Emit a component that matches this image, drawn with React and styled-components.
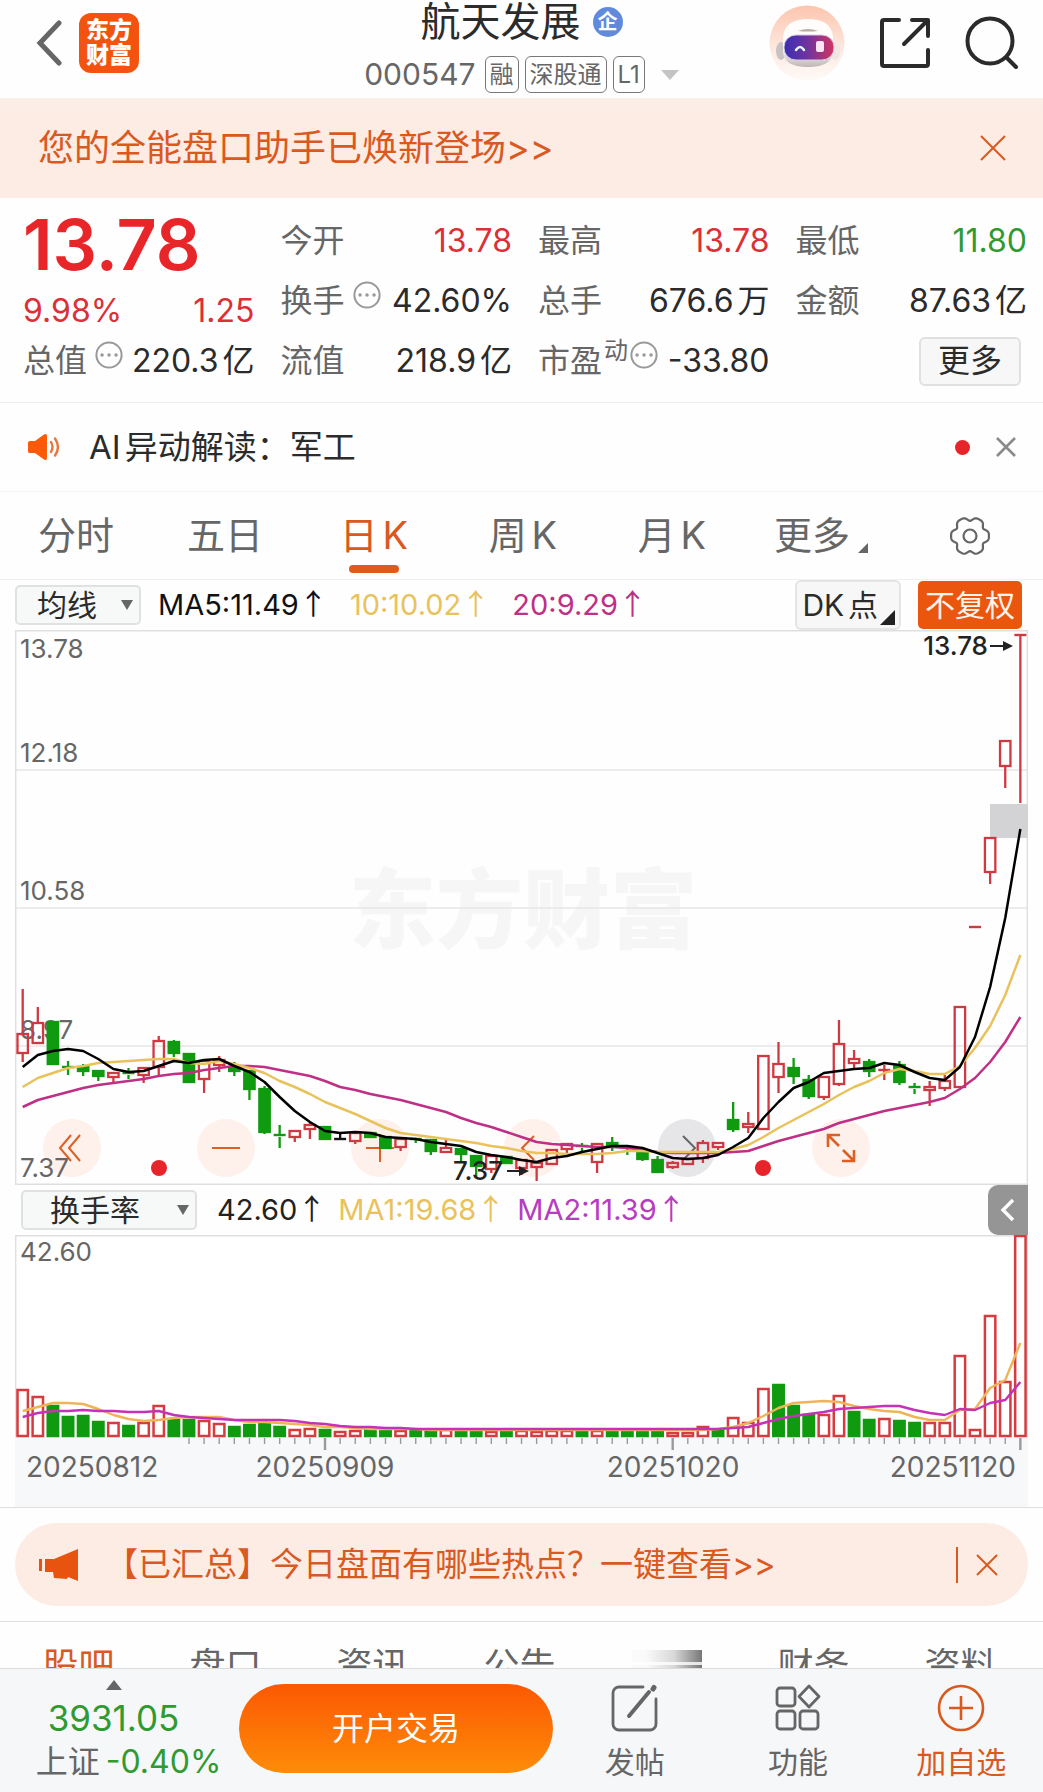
import { useState } from 'react';
import styled, { createGlobalStyle } from 'styled-components';

const color = {
  text: '#2b2b2b',
  label: '#666666',
  red: '#dc2f36',
  green: '#2f9a2f',
  orange: '#d9591f',
  brand: '#ea560e',
  peach: '#fdece4',
  line: '#e6e6e6',
  yellow: '#e9c25c',
  magenta: '#bf2f86',
  purple: '#b63cc0',
};

const STEP = 15.116;
const candleX = index => 7.7 + index * STEP;

// [direction, high, body top, body bottom, low]
const candles = [
  ['up', 359, 404, 423, 432], ['up', 377, 393, 413, 413], ['down', 392, 392, 434, 435],
  ['down', 431, 437, 438, 445], ['down', 434, 437, 441, 446], ['down', 440, 441, 446, 451],
  ['up', 443, 443, 447, 452], ['down', 438, 443, 445, 449], ['up', 438, 438, 445, 453],
  ['up', 406, 411, 437, 446], ['down', 410, 412, 423, 427], ['down', 424, 424, 452, 452],
  ['up', 431, 431, 449, 463], ['up', 426, 430, 435, 442], ['down', 432, 437, 441, 446],
  ['down', 441, 441, 459, 470], ['down', 456, 459, 502, 504], ['down', 495, 505, 507, 518],
  ['up', 501, 501, 507, 512], ['up', 493, 495, 499, 509], ['down', 496, 497, 509, 510],
  ['flat', 504, 509, 509, 510], ['up', 503, 503, 511, 514], ['down', 503, 503, 507, 507],
  ['down', 507, 507, 518, 518], ['up', 509, 509, 517, 521], ['down', 509, 509, 510, 513],
  ['down', 509, 510, 521, 525], ['up', 510, 518, 522, 522], ['down', 518, 519, 524, 532],
  ['down', 526, 526, 536, 547], ['up', 526, 526, 539, 543], ['down', 527, 527, 533, 533],
  ['up', 529, 530, 538, 545], ['up', 532, 533, 537, 551], ['up', 520, 520, 534, 534],
  ['up', 514, 514, 519, 523], ['down', 513, 516, 518, 521], ['up', 514, 514, 532, 543],
  ['down', 507, 513, 516, 521], ['down', 515, 517, 518, 525], ['down', 523, 523, 529, 531],
  ['down', 526, 530, 542, 542], ['up', 531, 533, 537, 539], ['up', 528, 529, 534, 534],
  ['up', 510, 513, 528, 533], ['up', 513, 513, 517, 520], ['down', 472, 490, 499, 502],
  ['up', 482, 494, 497, 503], ['up', 426, 426, 499, 499], ['up', 412, 434, 447, 463],
  ['down', 428, 438, 446, 454], ['down', 445, 450, 466, 469], ['up', 447, 447, 467, 470],
  ['up', 390, 414, 454, 456], ['up', 420, 429, 433, 439], ['down', 429, 432, 441, 447],
  ['up', 435, 440, 441, 450], ['down', 431, 435, 452, 455], ['down', 453, 457, 459, 464],
  ['up', 451, 457, 460, 476], ['up', 445, 451, 458, 461], ['up', 377, 377, 457, 457],
  ['up', 297, 297, 297, 297], ['up', 208, 208, 242, 254], ['up', 111, 111, 136, 158],
  ['up', 5, 5, 5, 173],
];

const ma5 = [
  437, 425, 421, 419, 421, 429, 439, 442, 441, 436, 431, 433, 430, 429, 436, 442, 452, 467, 481,
  492, 501, 503, 502, 503, 507, 508, 509, 512, 514, 516, 522, 525, 527, 530, 532, 528, 526, 522,
  519, 516, 516, 518, 523, 528, 529, 528, 525, 517, 508, 488, 472, 458, 452, 443, 441, 439, 438,
  433, 435, 442, 448, 450, 437, 407, 357, 288, 199,
];
const ma10 = [
  457, 448, 443, 438, 436, 433, 432, 431, 430, 429, 429, 433, 434, 431, 434, 438, 443, 451, 457,
  464, 472, 478, 484, 491, 498, 503, 505, 507, 509, 511, 513, 516, 518, 521, 523, 523, 524, 524,
  524, 523, 521, 521, 522, 522, 522, 522, 522, 519, 515, 507, 498, 490, 482, 474, 465, 457, 451,
  443, 439, 441, 444, 444, 436, 418, 396, 365, 325,
];
const ma20 = [
  477, 470, 466, 462, 458, 455, 453, 451, 449, 446, 444, 443, 440, 438, 436, 436, 437, 440, 443,
  446, 451, 457, 460, 464, 467, 470, 474, 478, 482, 488, 493, 497, 502, 507, 512, 514, 515, 516,
  517, 517, 518, 520, 522, 523, 523, 523, 523, 522, 521, 516, 511, 507, 503, 499, 493, 489, 485,
  481, 478, 475, 472, 468, 459, 448, 432, 412, 387,
];

const turnover = [
  48, 41, 32, 21, 22, 16, 15, 12, 15, 32, 18, 18, 17, 14, 11, 13, 14, 11, 8, 9, 8, 6, 7, 8, 8, 7,
  7, 8, 8, 8, 8, 6, 6, 7, 6, 7, 7, 7, 7, 8, 8, 7, 7, 5, 5, 11, 8, 20, 15, 49, 53, 32, 23, 23, 42,
  26, 18, 19, 17, 15, 15, 15, 82, 8, 122, 56, 202,
];
const turnoverFalls = [
  2, 3, 4, 5, 7, 10, 11, 14, 15, 16, 17, 20, 23, 24, 26, 27, 29, 30, 32, 37, 39, 40, 41, 42, 46,
  50, 51, 52, 55, 56, 58, 59,
];
const turnoverMa1 = [
  176, 172, 168, 168, 169, 174, 180, 184, 186, 185, 183, 182, 182, 182, 185, 187, 187, 188, 189,
  190, 192, 192, 193, 194, 194, 194, 194, 195, 195, 195, 195, 195, 195, 195, 195, 195, 195, 195,
  195, 195, 195, 195, 195, 195, 195, 195, 194, 192, 188, 181, 173, 168, 167, 166, 167, 171, 174,
  176, 177, 182, 185, 185, 175, 174, 153, 145, 108,
];
const turnoverMa2 = [
  182, 178, 176, 176, 175, 176, 176, 177, 177, 176, 180, 182, 183, 184, 185, 185, 185, 185, 186,
  188, 189, 191, 192, 192, 193, 193, 194, 194, 194, 194, 194, 194, 194, 194, 194, 194, 194, 194,
  194, 194, 194, 194, 194, 194, 194, 194, 194, 193, 192, 188, 184, 181, 179, 177, 174, 173, 172,
  171, 171, 175, 178, 180, 174, 175, 168, 165, 147,
];

const toPoints = values => values.map((y, i) => `${candleX(i)},${y}`).join(' ');

const App = () => {
  const [period, setPeriod] = useState('日K');

  return (
    <>
      <GlobalStyle />
      <Page>
        <Scroller>
          <Header />
          <NoticeBar>
            <NoticeLink href='#assistant'>您的全能盘口助手已焕新登场&gt;&gt;</NoticeLink>
            <IconButton aria-label='关闭提示'>
              <CrossIcon size={26} stroke={color.orange} width={2} />
            </IconButton>
          </NoticeBar>
          <Quote />
          <NewsBar>
            <HornIcon />
            <NewsText>AI异动解读：军工</NewsText>
            <Dot />
            <IconButton aria-label='关闭解读'>
              <CrossIcon size={20} stroke='#8a8a8a' width={2.6} />
            </IconButton>
          </NewsBar>
          <PeriodTabs role='tablist'>
            {['分时', '五日', '日K', '周K', '月K'].map(label => (
              <PeriodTab
                role='tab'
                key={label}
                aria-selected={label === period}
                $active={label === period}
                onClick={() => setPeriod(label)}
              >
                {label}
              </PeriodTab>
            ))}
            <PeriodTab>
              更多
              <Corner $size={10} $color={color.label} />
            </PeriodTab>
            <PeriodTab aria-label='设置'>
              <GearIcon />
            </PeriodTab>
          </PeriodTabs>
          <ChartBar $gap={17}>
            <Picker label='均线' width={126} indent={20} />
            <Legends $gap={22}>
              <Legend $color='#111111'>MA5:11.49</Legend>
              <Legend $color={color.yellow}>10:10.02</Legend>
              <Legend $color={color.magenta}>20:9.29</Legend>
            </Legends>
            <DkButton>
              DK点
              <Corner $size={15} $color='#222222' />
            </DkButton>
            <AdjustButton>不复权</AdjustButton>
          </ChartBar>
          <PriceChart />
          <ChartBar $gap={20} $indent={6}>
            <Picker label='换手率' width={176} indent={27} />
            <Legends $gap={12}>
              <Legend $color='#222222'>42.60</Legend>
              <Legend $color={color.yellow}>MA1:19.68</Legend>
              <Legend $color={color.purple}>MA2:11.39</Legend>
            </Legends>
            <DrawerButton aria-label='展开'>
              <svg width='16' height='26' viewBox='0 0 16 26' fill='none'>
                <path d='M13 3 3 13l10 10' stroke='#fff' strokeWidth='3.4' />
              </svg>
            </DrawerButton>
          </ChartBar>
          <TurnoverChart />
          <HotBar>
            <HotPill>
              <MegaphoneIcon />
              <HotLink href='#hot'>【已汇总】今日盘面有哪些热点？一键查看&gt;&gt;</HotLink>
              <HotDivider />
              <IconButton aria-label='关闭热点'>
                <CrossIcon size={22} stroke={color.orange} width={2} />
              </IconButton>
            </HotPill>
          </HotBar>
          <SectionTabs>
            <SectionTab href='#bar' $active>股吧</SectionTab>
            <SectionTab href='#depth'>盘口</SectionTab>
            <SectionTab href='#news'>资讯</SectionTab>
            <SectionTab href='#notice'>公告</SectionTab>
            <Loading />
            <SectionTab href='#finance'>财务</SectionTab>
            <SectionTab href='#profile'>资料</SectionTab>
          </SectionTabs>
        </Scroller>
        <BottomBar />
      </Page>
    </>
  );
};

const Header = () => (
  <HeaderRoot>
    <HeaderSide>
      <IconButton aria-label='返回'>
        <svg width='26' height='46' viewBox='0 0 26 46' fill='none'>
          <path d='M23 3 4 23l19 20' stroke='#666' strokeWidth='5' strokeLinecap='round' />
        </svg>
      </IconButton>
      <Logo>
        东方
        <br />
        财富
      </Logo>
    </HeaderSide>
    <HeaderTitle>
      <Name>
        航天发展
        <CompanyMark>企</CompanyMark>
      </Name>
      <Code>
        000547
        <Tags>
          <Tag>融</Tag>
          <Tag>深股通</Tag>
          <Tag>L1</Tag>
        </Tags>
        <svg width='18' height='10' viewBox='0 0 18 10'>
          <path d='M0 0h18L9 10z' fill='#c4c4c4' />
        </svg>
      </Code>
    </HeaderTitle>
    <HeaderSide $end>
      <IconButton aria-label='智能助手'>
        <RobotIcon />
      </IconButton>
      <IconButton aria-label='分享'>
        <svg width='52' height='52' viewBox='0 0 52 52' fill='none' stroke='#2b2b2b' strokeWidth='4' strokeLinecap='round' strokeLinejoin='round'>
          <path d='M20 3H5a2 2 0 0 0-2 2v42a2 2 0 0 0 2 2h42a2 2 0 0 0 2-2V33M33 3h16v16M49 3 25 27' />
        </svg>
      </IconButton>
      <IconButton aria-label='搜索'>
        <svg width='54' height='54' viewBox='0 0 54 54' fill='none' stroke='#2b2b2b' strokeWidth='4' strokeLinecap='round'>
          <circle cx='25' cy='25' r='22.5' />
          <path d='m42 42 9 9' />
        </svg>
      </IconButton>
    </HeaderSide>
  </HeaderRoot>
);

const Quote = () => (
  <QuoteRoot>
    <QuoteColumn>
      <Price>13.78</Price>
      <Change>
        <span>9.98%</span>
        <span>1.25</span>
      </Change>
      <Stat label='总值' value='220.3亿' info />
    </QuoteColumn>
    <QuoteColumn>
      <Stat label='今开' value='13.78' tone={color.red} />
      <Stat label='换手' value='42.60%' info />
      <Stat label='流值' value='218.9亿' />
    </QuoteColumn>
    <QuoteColumn>
      <Stat label='最高' value='13.78' tone={color.red} />
      <Stat label='总手' value='676.6万' />
      <Stat label='市盈' value='-33.80' note='动' info />
    </QuoteColumn>
    <QuoteColumn>
      <Stat label='最低' value='11.80' tone={color.green} />
      <Stat label='金额' value='87.63亿' />
      <StatRow>
        <MoreButton>更多</MoreButton>
      </StatRow>
    </QuoteColumn>
  </QuoteRoot>
);

const Stat = ({ label, value, tone, note, info }) => (
  <StatRow>
    <StatLabel>
      {label}
      {note && <StatNote>{note}</StatNote>}
      {info && <InfoIcon $tight={Boolean(note)} />}
    </StatLabel>
    <StatValue $color={tone || color.text}>{value}</StatValue>
  </StatRow>
);

const Picker = ({ label, width, indent }) => (
  <PickerRoot $width={width}>
    <PickerSelect aria-label={label} $indent={indent}>
      <option>{label}</option>
    </PickerSelect>
    <PickerCaret width='12' height='10' viewBox='0 0 12 10'>
      <path d='M0 0h12L6 10z' fill='#666' />
    </PickerCaret>
  </PickerRoot>
);

const Candle = ({ index, data }) => {
  const [direction, high, top, bottom, low] = data;
  const x = candleX(index);
  const stroke = { up: '#cf3a42', down: '#0f9a0f', flat: '#111111' }[direction];
  const height = Math.max(bottom - top, 0);

  return (
    <g stroke={stroke} strokeWidth='2.3'>
      <path d={`M${x} ${high}V${top}M${x} ${bottom}V${low}`} />
      {height < 3 ? (
        <path d={`M${x - 6} ${top}h12`} strokeWidth='2.4' />
      ) : (
        <rect x={x - 5.2} y={top} width='10.4' height={height} fill={direction === 'down' ? stroke : 'none'} />
      )}
    </g>
  );
};

const PriceChart = () => (
  <ChartFrame>
    <ChartTools>
      <ToolButton aria-label='快退'>
        <path d='M28 16 17 29l11 13M37 16 26 29l11 13' />
      </ToolButton>
      <ToolButton aria-label='缩小'>
        <path d='M15 29h28' />
      </ToolButton>
      <ToolButton aria-label='放大'>
        <path d='M15 29h28M29 15v28' />
      </ToolButton>
      <ToolButton aria-label='后退'>
        <path d='M30 17 18 29l12 12' />
      </ToolButton>
      <ToolButton aria-label='前进' muted>
        <path d='M25 17l12 12-12 12' />
      </ToolButton>
      <ToolButton aria-label='全屏'>
        <path d='M16 28V16h12M16 16l11 11M42 31v11H30M42 42 31 31' strokeWidth='2.6' />
      </ToolButton>
    </ChartTools>
    <ChartSvg viewBox='0 0 1013 555' role='img' aria-label='日K线图'>
      <text x='508' y='312' textAnchor='middle' fontSize='87' fontWeight='900' fill='#f7f6f6'>东方财富</text>
      <path d='M0 140h1013M0 278h1013M0 416h1013' stroke={color.line} strokeWidth='1.4' />
      <path d='M.7 .7h1011.600v553.600H.7z' fill='none' stroke='#dfdfdf' strokeWidth='1.4' />
      <g fontSize='26' fill={color.label}>
        <text x='5' y='28'>13.78</text>
        <text x='5' y='132'>12.18</text>
        <text x='5' y='270'>10.58</text>
        <text x='5' y='409'>8.97</text>
        <text x='5' y='547'>7.37</text>
      </g>
      <rect x='975' y='174' width='38' height='34' fill='#d3d3d6' />
      {candles.map((data, i) => (
        <Candle key={i} index={i} data={data} />
      ))}
      <g fill='none' strokeWidth='2.5' strokeLinejoin='round'>
        <polyline points={toPoints(ma20)} stroke={color.magenta} />
        <polyline points={toPoints(ma10)} stroke={color.yellow} />
        <polyline points={toPoints(ma5)} stroke='#000' />
      </g>
      <g fill='#e8242b'>
        <circle cx='144' cy='538' r='8' />
        <circle cx='748' cy='538' r='8' />
      </g>
      <g fontSize='26' fontWeight='500' fill='#222'>
        <text x='973' y='25' textAnchor='end'>13.78</text>
        <text x='488' y='550' textAnchor='end'>7.37</text>
        <path d='M975 16h15M492 541h15' stroke='#222' strokeWidth='2' />
        <path d='m988 11 10 5-10 5zM504 536l10 5-10 5z' />
      </g>
    </ChartSvg>
  </ChartFrame>
);

const TurnoverChart = () => (
  <AxisArea>
    <ChartSvg viewBox='0 0 1013 272' role='img' aria-label='换手率图'>
      <path d='M0 0h1013v202H0z' fill='#fff' />
      <path d='M0 .7h1013M.7 0v202M1012.3 0v202' stroke='#dfdfdf' strokeWidth='1.4' />
      <text x='5' y='26' fontSize='26' fill={color.label}>42.60</text>
      {turnover.map((height, i) => {
        const falls = turnoverFalls.includes(i);
        return (
          <rect
            key={i}
            x={candleX(i) - 5.2}
            y={203 - height}
            width='10.4'
            height={height - 2}
            stroke={falls ? '#0f9a0f' : '#d63b40'}
            strokeWidth='2.5'
            fill={falls ? '#0f9a0f' : '#fff'}
          />
        );
      })}
      <g fill='none' strokeWidth='2.4' strokeLinejoin='round'>
        <polyline points={toPoints(turnoverMa1)} stroke='#f0b458' />
        <polyline points={toPoints(turnoverMa2)} stroke='#c532b8' />
      </g>
      {turnover.slice(11).map((_, i) => {
        const major = (i + 11 - 20) % 23 === 0;
        return (
          <path
            key={i}
            d={`M${candleX(i + 11)} 203v${major ? 12 : 6}`}
            stroke='#999'
            strokeWidth={major ? 2.4 : 1.4}
          />
        );
      })}
      <g fontSize='28' fill={color.label}>
        <text x='11' y='242'>20250812</text>
        <text x='310' y='242' textAnchor='middle'>20250909</text>
        <text x='658' y='242' textAnchor='middle'>20251020</text>
        <text x='1001' y='242' textAnchor='end'>20251120</text>
      </g>
    </ChartSvg>
  </AxisArea>
);

const BottomBar = () => (
  <BottomRoot>
    <IndexButton>
      <svg width='16' height='10' viewBox='0 0 16 10'>
        <path d='M0 10h16L8 0z' fill='#666' />
      </svg>
      <IndexValue>3931.05</IndexValue>
      <IndexChange>
        <span>上证</span>
        -0.40%
      </IndexChange>
    </IndexButton>
    <TradeButton>开户交易</TradeButton>
    <Actions>
      <Action>
        <svg width='48' height='48' viewBox='0 0 48 48' fill='none' stroke='#666' strokeWidth='2.8' strokeLinecap='round'>
          <path d='M32 3H8a6 6 0 0 0-6 6v31a6 6 0 0 0 6 6h31a6 6 0 0 0 6-6V15' />
          <path d='m18 32 20-24' strokeWidth='4' />
          <path d='m42 5 1-1.500' strokeWidth='5' />
        </svg>
        发帖
      </Action>
      <Action>
        <svg width='48' height='48' viewBox='0 0 48 48' fill='none' stroke='#666' strokeWidth='2.8' strokeLinejoin='round'>
          <rect x='3' y='4' width='18' height='18' rx='3' />
          <rect x='3' y='27' width='18' height='18' rx='3' />
          <rect x='26' y='27' width='18' height='18' rx='3' />
          <path d='m35 2 10 10.500L35 23 25 12.500z' />
        </svg>
        功能
      </Action>
      <Action $accent>
        <svg width='48' height='48' viewBox='0 0 48 48' fill='none' stroke={color.orange} strokeWidth='2.6'>
          <circle cx='24' cy='24' r='22' />
          <path d='M24 12v24M12 24h24' />
        </svg>
        加自选
      </Action>
    </Actions>
  </BottomRoot>
);

const CrossIcon = ({ size, stroke, width }) => (
  <svg width={size} height={size} viewBox={`0 0 ${size} ${size}`}>
    <path
      d={`M1 1 ${size - 1} ${size - 1}M${size - 1} 1 1 ${size - 1}`}
      stroke={stroke}
      strokeWidth={width}
    />
  </svg>
);

const InfoIcon = ({ $tight }) => (
  <InfoSvg $tight={$tight} viewBox='0 0 28 28' fill='none'>
    <circle cx='14' cy='14' r='12.600' stroke='#999' strokeWidth='2' />
    <path d='M7 14h.1M14 14h.1M21 14h.1' stroke='#999' strokeWidth='3.400' strokeLinecap='round' />
  </InfoSvg>
);

const HornIcon = () => (
  <svg width='34' height='28' viewBox='0 0 34 28' fill='none'>
    <path d='M1 9.500Q1 8 3 8h5L17 1.500Q20 0 20 3v22q0 3-3 1.500L8 20H3q-2 0-2-1.500z' fill='#fb5a08' />
    <path d='M24 9q3 5 0 10M28 5.500q6 8.500 0 17' stroke='#e8763a' strokeWidth='2.400' strokeLinecap='round' />
  </svg>
);

const MegaphoneIcon = () => (
  <svg width='40' height='34' viewBox='0 0 40 34'>
    <path d='M0 11h3v12H0zM6 11h9L39 1v32l-10-4-1 2-13-1-1-6H6z' fill='#e8540f' />
  </svg>
);

const RobotIcon = () => (
  <svg width='76' height='76' viewBox='0 0 76 76'>
    <defs>
      <linearGradient id='halo' x1='0' y1='0' x2='0' y2='1'>
        <stop offset='0' stopColor='#fcc5ae' />
        <stop offset='.6' stopColor='#fdeae2' />
        <stop offset='1' stopColor='#fffaf6' />
      </linearGradient>
      <linearGradient id='visor'>
        <stop offset='0' stopColor='#3a2fb4' />
        <stop offset='.5' stopColor='#74339c' />
        <stop offset='1' stopColor='#d23560' />
      </linearGradient>
      <linearGradient id='shell' x1='0' y1='0' x2='0' y2='1'>
        <stop offset='.6' stopColor='#fffdfb' />
        <stop offset='1' stopColor='#bfb5b8' />
      </linearGradient>
    </defs>
    <circle cx='38' cy='38' r='37.500' fill='url(#halo)' />
    <ellipse cx='12' cy='46' rx='5' ry='9' fill='#c9c2c4' />
    <ellipse cx='66' cy='46' rx='5' ry='9' fill='#efe6e4' />
    <path d='M14 34C14 20 24 14 39 14s25 6 25 20v12c0 12-11 16-25 16S14 58 14 46z' fill='url(#shell)' />
    <path d='M29 26q10-4 20 0-10 1-20 0' fill='#b9ab9f' />
    <rect x='15' y='30' width='50' height='25' rx='12' fill='url(#visor)' stroke='#d9cce6' />
    <path d='M27 45q4-6 8 0' stroke='#dff' strokeWidth='2.500' fill='none' strokeLinecap='round' />
    <rect x='47' y='36' width='8' height='11' rx='2' fill='#fbe6f4' />
  </svg>
);

const gearPoints = Array.from({ length: 96 }, (_, i) => {
  const angle = (i / 96) * Math.PI * 2;
  const radius = 17.6 + 1.9 * Math.cos(angle * 6) - 0.6 * Math.cos(angle * 12);
  return `${(21 + radius * Math.cos(angle)).toFixed(2)},${(20 + radius * Math.sin(angle)).toFixed(2)}`;
}).join(' ');

const GearIcon = () => (
  <svg width='42' height='40' viewBox='0 0 42 40' fill='none' stroke='#666' strokeWidth='2.200'>
    <polygon points={gearPoints} strokeLinejoin='round' />
    <circle cx='21' cy='20' r='6.500' />
  </svg>
);

const ToolButton = ({ children, muted, ...props }) => (
  <ToolRoot $muted={muted} {...props}>
    <svg width='58' height='58' viewBox='0 0 58 58' fill='none' stroke={muted ? '#666' : '#dd5f24'} strokeWidth='2'>
      {children}
    </svg>
  </ToolRoot>
);

const GlobalStyle = createGlobalStyle`
  * {
    box-sizing: border-box;
  }

  body {
    margin: 0;
    background-color: #fefefe;
    color: ${color.text};
    font-family: Inter, 'Noto Sans CJK SC', sans-serif;
    line-height: 1.3;
    text-autospace: normal;
  }

  button,
  select {
    margin: 0;
    padding: 0;
    border: none;
    background: none;
    color: inherit;
    font: inherit;
    cursor: pointer;
  }

  a {
    color: inherit;
    text-decoration: none;
  }

  svg {
    display: block;
    flex-shrink: 0;
  }
`;

const Page = styled.div`
  display: flex;
  flex-direction: column;
  height: 100vh;
`;

const Scroller = styled.main`
  flex: 1;
  min-height: 0;
  overflow-y: auto;
  scrollbar-width: none;
`;

const IconButton = styled.button`
  display: flex;
  align-items: center;
  justify-content: center;
`;

const HeaderRoot = styled.header`
  display: grid;
  grid-template-columns: 1fr auto 1fr;
  height: 98px;
`;

const HeaderSide = styled.div`
  display: flex;
  align-items: center;
  justify-content: ${({ $end }) => ($end ? 'flex-end' : 'flex-start')};
  gap: ${({ $end }) => ($end ? 34 : 17)}px;
  height: 86px;
  padding: ${({ $end }) => ($end ? '0 24px 0 0' : '0 0 0 36px')};
`;

const Logo = styled.div`
  width: 60px;
  height: 60px;
  padding: 5px 0;
  border-radius: 12px;
  background-color: #f4520f;
  color: #ffffff;
  font-size: 23px;
  font-weight: 900;
  line-height: 25px;
  text-align: center;
`;

const HeaderTitle = styled.div`
  display: flex;
  flex-direction: column;
  align-items: center;
`;

const Name = styled.h1`
  display: flex;
  align-items: center;
  gap: 12px;
  height: 43px;
  margin: 0;
  font-size: 40px;
  font-weight: 400;
`;

const CompanyMark = styled.span`
  width: 30px;
  height: 30px;
  border-radius: 50%;
  background-color: #6189dc;
  color: #ffffff;
  font-size: 20px;
  font-weight: 700;
  line-height: 30px;
  text-align: center;
`;

const Code = styled.div`
  display: flex;
  align-items: center;
  height: 63px;
  color: ${color.label};
  font-size: 30px;
`;

const Tags = styled.span`
  display: flex;
  gap: 6px;
  margin: 0 16px 0 9px;
`;

const Tag = styled.span`
  height: 37px;
  padding: 0 4px;
  border: 1px solid #777777;
  border-radius: 6px;
  font-size: 24px;
  line-height: 35px;
`;

const NoticeBar = styled.div`
  display: flex;
  align-items: center;
  justify-content: space-between;
  height: 100px;
  padding: 0 37px 0 38px;
  background: linear-gradient(#faeee6, ${color.peach} 20px);
`;

const NoticeLink = styled.a`
  color: ${color.orange};
  font-size: 36px;
`;

const QuoteRoot = styled.section`
  display: grid;
  grid-template-columns: repeat(4, 1fr);
  gap: 26px;
  padding: 13px 16px 11px 23px;
  border-bottom: 1px solid #eeeeee;
`;

const QuoteColumn = styled.div`
  display: flex;
  flex-direction: column;
`;

const Price = styled.div`
  height: 70px;
  color: #e8262a;
  font-size: 70px;
  font-weight: 600;
  line-height: 68px;
`;

const Change = styled.div`
  display: flex;
  justify-content: space-between;
  height: 50px;
  padding-top: 10px;
  color: ${color.red};
  font-size: 32px;
  line-height: 40px;
`;

const StatRow = styled.div`
  display: flex;
  align-items: center;
  justify-content: space-between;
  height: 60px;
  font-size: 32px;
  white-space: nowrap;
`;

const StatLabel = styled.span`
  display: flex;
  align-items: center;
  color: ${color.label};
`;

const StatNote = styled.span`
  margin: 0 0 20px 2px;
  font-size: 24px;
`;

const InfoSvg = styled.svg`
  width: 28px;
  height: 28px;
  margin: 0 0 12px ${({ $tight }) => ($tight ? 2 : 8)}px;
`;

const StatValue = styled.span`
  color: ${({ $color }) => $color};
`;

const MoreButton = styled.button`
  width: 102px;
  height: 49px;
  margin: 0 6px 0 auto;
  border: 2px solid #e0e0e0;
  border-radius: 6px;
  background-color: #f7f7f7;
  line-height: 44px;
`;

const NewsBar = styled.div`
  display: flex;
  align-items: center;
  height: 89px;
  padding: 0 27px;
  border-bottom: 1px solid #f3f3f3;
`;

const NewsText = styled.span`
  flex: 1;
  margin-left: 28px;
  font-size: 33px;
`;

const Dot = styled.span`
  width: 15px;
  height: 15px;
  margin-right: 26px;
  border-radius: 50%;
  background-color: #e8242b;
`;

const PeriodTabs = styled.div`
  display: grid;
  grid-template-columns: repeat(7, 1fr);
  height: 88px;
  border-bottom: 1px solid #f0f0f0;
`;

const PeriodTab = styled.button`
  display: flex;
  align-items: center;
  justify-content: center;
  position: relative;
  padding-left: 3px;
  color: ${({ $active }) => ($active ? color.orange : color.label)};
  font-size: 38px;

  &::after {
    content: '';
    position: absolute;
    bottom: 6px;
    width: 50px;
    height: 8px;
    border-radius: 4px;
    background-color: ${({ $active }) => ($active ? '#e05a1a' : 'transparent')};
  }
`;

const Corner = styled.span`
  align-self: flex-end;
  width: ${({ $size }) => $size}px;
  height: ${({ $size }) => $size}px;
  margin-bottom: ${({ $size }) => ($size > 10 ? 3 : 26)}px;
  margin-left: ${({ $size }) => ($size > 10 ? 2 : 8)}px;
  background-color: ${({ $color }) => $color};
  clip-path: polygon(100% 0, 100% 100%, 0 100%);
`;

const ChartBar = styled.div`
  display: flex;
  align-items: center;
  height: 50px;
  margin: 0 15px;
  padding-left: ${({ $indent = 0 }) => $indent}px;
  gap: ${({ $gap }) => $gap}px;
  font-size: 30px;
`;

const PickerRoot = styled.span`
  display: flex;
  align-items: center;
  position: relative;
  flex-shrink: 0;
  width: ${({ $width }) => $width}px;
  height: 40px;
`;

const PickerSelect = styled.select`
  width: 100%;
  height: 100%;
  padding-left: ${({ $indent }) => $indent}px;
  border: 2px solid #e0e2e2;
  border-radius: 5px;
  background-color: #f7f8f8;
  line-height: 36px;
  appearance: none;
`;

const PickerCaret = styled.svg`
  position: absolute;
  right: 8px;
  pointer-events: none;
`;

const Legends = styled.div`
  display: flex;
  flex: 1;
  gap: ${({ $gap }) => $gap}px;
  font-size: 29px;
  white-space: nowrap;
`;

const Legend = styled.span`
  color: ${({ $color }) => $color};

  &::after {
    content: '↑';
    font-family: 'Noto Sans CJK SC', sans-serif;
    line-height: 1;
  }
`;

const DkButton = styled.button`
  display: flex;
  align-items: center;
  height: 50px;
  padding: 0 4px 0 5px;
  border: 2px solid #e4e4e4;
  border-radius: 6px;
  background-color: #f7f7f7;
  white-space: nowrap;
`;

const AdjustButton = styled.button`
  width: 104px;
  height: 48px;
  margin-right: 6px;
  border-radius: 5px;
  background-color: ${color.brand};
  color: #fff3ea;
  line-height: 48px;
`;

const DrawerButton = styled.button`
  display: flex;
  align-items: center;
  justify-content: center;
  width: 40px;
  height: 50px;
  border-radius: 10px 0 0 10px;
  background-color: #959595;
`;

const ChartFrame = styled.div`
  position: relative;
  margin: 0 15px;
`;

const ChartSvg = styled.svg`
  position: relative;
  width: 100%;
  height: auto;
  pointer-events: none;
`;

const ChartTools = styled.div`
  display: flex;
  justify-content: space-between;
  position: absolute;
  right: 158px;
  bottom: 8px;
  left: 28px;
`;

const ToolRoot = styled.button`
  width: 58px;
  height: 58px;
  border-radius: 50%;
  background-color: ${({ $muted }) => ($muted ? '#e6e6e8' : '#fef0ea')};
`;

const AxisArea = styled.div`
  margin: 0 15px;
  background-color: #f7f8fa;
`;

const HotBar = styled.div`
  padding: 15px;
  border: 1px solid #dfdfdf;
  border-width: 1px 0;
`;

const HotPill = styled.div`
  display: flex;
  align-items: center;
  height: 83px;
  padding: 0 30px 0 24px;
  border-radius: 42px;
  background-color: ${color.peach};
`;

const HotLink = styled.a`
  flex: 1;
  margin-left: 26px;
  color: ${color.orange};
  font-size: 33px;
  white-space: nowrap;
`;

const HotDivider = styled.span`
  width: 2px;
  height: 36px;
  margin-right: 18px;
  background-color: ${color.orange};
`;

const SectionTabs = styled.nav`
  display: grid;
  grid-template-columns: repeat(7, 1fr);
  padding: 18px 9px 16px 5px;
`;

const SectionTab = styled.a`
  color: ${({ $active }) => ($active ? color.orange : color.label)};
  font-size: 36px;
  line-height: 52px;
  text-align: center;
`;

const Loading = styled.span`
  justify-self: center;
  width: 70px;
  height: 20px;
  margin-top: 10px;
  background:
    linear-gradient(transparent 60%, #ffffffcc 60%, #ffffffcc 75%, transparent 75%),
    linear-gradient(90deg, #fafafa 20%, #d8d8d8 60%, #777777);
`;

const BottomRoot = styled.footer`
  display: flex;
  height: 124px;
  border-top: 1px solid #dcdcdc;
  background-color: #f6f7f9;
`;

const IndexButton = styled.button`
  display: flex;
  flex-direction: column;
  align-items: center;
  width: 239px;
  padding: 11px 12px 0 0;
  color: ${color.green};
`;

const IndexValue = styled.span`
  margin-top: 6px;
  font-size: 35px;
  line-height: 44px;
`;

const IndexChange = styled.span`
  display: flex;
  gap: 6px;
  padding-left: 30px;
  font-size: 32px;
  line-height: 44px;
  white-space: nowrap;

  span {
    color: ${color.label};
  }
`;

const TradeButton = styled.button`
  width: 314px;
  height: 89px;
  margin-top: 15px;
  border-radius: 45px;
  background: linear-gradient(#fc5802, #fd8c08);
  color: #ffffff;
  font-size: 32px;
`;

const Actions = styled.div`
  display: grid;
  flex: 1;
  grid-template-columns: repeat(3, 1fr);
`;

const Action = styled.button`
  display: flex;
  flex-direction: column;
  align-items: center;
  gap: 6px;
  padding-top: 15px;
  color: ${({ $accent }) => ($accent ? color.orange : color.label)};
  font-size: 30px;
  line-height: 48px;
`;

export default App;
